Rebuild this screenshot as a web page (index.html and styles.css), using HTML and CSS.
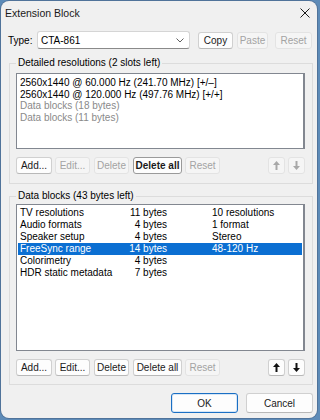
FILE: index.html
```html
<!DOCTYPE html>
<html lang="en">

<head>
    <meta charset="utf-8">
    <meta name="viewport" content="width=device-width, initial-scale=1.0">
    <title>Extension Block</title>
    <link rel="stylesheet" href="styles.css">
</head>

<body>

    <div class="window">
        <div class="titlebar">
            <span>Extension Block</span>
            <svg class="close" width="10" height="10" viewBox="0 0 10 10">
                <path d="M0.5 0.5L9.5 9.5M9.5 0.5L0.5 9.5" stroke="#1a1a1a" stroke-width="1" />
            </svg>
        </div>

        <div class="content">
            <div class="type-row">
                <span class="type-label">Type:</span>
                <div class="combo">
                    <span>CTA-861</span>
                    <svg width="8" height="5" viewBox="0 0 8 5">
                        <path d="M0.5 0.5L4 4L7.5 0.5" fill="none" stroke="#606060" />
                    </svg>
                </div>
                <button class="btn copy">Copy</button>
                <button class="btn paste" disabled>Paste</button>
                <button class="btn reset-top" disabled>Reset</button>
            </div>

            <fieldset class="group group-res">
                <legend>Detailed resolutions (2 slots left)</legend>
                <div class="listbox list-res">
                    <div class="row">2560x1440 @ 60.000 Hz (241.70 MHz) [+/–]</div>
                    <div class="row">2560x1440 @ 120.000 Hz (497.76 MHz) [+/+]</div>
                    <div class="row muted">Data blocks (18 bytes)</div>
                    <div class="row muted">Data blocks (11 bytes)</div>
                </div>
                <div class="btn-row">
                    <button class="btn w-add">Add...</button>
                    <button class="btn w-edit" disabled>Edit...</button>
                    <button class="btn w-del" disabled>Delete</button>
                    <button class="btn w-delall focus">Delete all</button>
                    <button class="btn w-reset" disabled>Reset</button>
                    <span class="spacer"></span>
                    <button class="btn arrow" disabled>
                        <svg width="7" height="9" viewBox="0 0 7 9"><path d="M3.5 0L7 4H4.5V9H2.5V4H0Z" fill="currentColor" /></svg>
                    </button>
                    <button class="btn arrow" disabled>
                        <svg width="7" height="9" viewBox="0 0 7 9"><path d="M3.5 9L7 5H4.5V0H2.5V5H0Z" fill="currentColor" /></svg>
                    </button>
                </div>
            </fieldset>

            <fieldset class="group group-data">
                <legend>Data blocks (43 bytes left)</legend>
                <div class="listbox list-data">
                    <div class="row"><span>TV resolutions</span><span class="size">11 bytes</span><span class="info">10 resolutions</span></div>
                    <div class="row"><span>Audio formats</span><span class="size">4 bytes</span><span class="info">1 format</span></div>
                    <div class="row"><span>Speaker setup</span><span class="size">4 bytes</span><span class="info">Stereo</span></div>
                    <div class="row selected"><span>FreeSync range</span><span class="size">14 bytes</span><span class="info">48-120 Hz</span></div>
                    <div class="row"><span>Colorimetry</span><span class="size">4 bytes</span><span class="info"></span></div>
                    <div class="row"><span>HDR static metadata</span><span class="size">7 bytes</span><span class="info"></span></div>
                </div>
                <div class="btn-row">
                    <button class="btn w-add">Add...</button>
                    <button class="btn w-edit">Edit...</button>
                    <button class="btn w-del">Delete</button>
                    <button class="btn w-delall">Delete all</button>
                    <button class="btn w-reset" disabled>Reset</button>
                    <span class="spacer"></span>
                    <button class="btn arrow">
                        <svg width="7" height="9" viewBox="0 0 7 9"><path d="M3.5 0L7 4H4.5V9H2.5V4H0Z" fill="currentColor" /></svg>
                    </button>
                    <button class="btn arrow">
                        <svg width="7" height="9" viewBox="0 0 7 9"><path d="M3.5 9L7 5H4.5V0H2.5V5H0Z" fill="currentColor" /></svg>
                    </button>
                </div>
            </fieldset>

            <div class="dialog-buttons">
                <button class="btn ok">OK</button>
                <button class="btn cancel">Cancel</button>
            </div>
        </div>
    </div>

</body></html>
```

FILE: styles.css
```css
body {
    margin: 0;
    width: 320px;
    height: 420px;
    overflow: hidden;
    background-color: #5d8bb8;
    font-family: "Liberation Sans", Arial, sans-serif;
    font-size: 10px;
    color: #000;
}

.window {
    margin: 1px 0 0 1px;
    width: 316px;
    height: 417px;
    background-color: #f0f0f0;
    border-radius: 8px;
    box-shadow: 0 0 0 1px #50739a;
    overflow: hidden;
}

.titlebar {
    height: 24px;
    display: flex;
    align-items: center;
    justify-content: space-between;
    padding: 0 7px 0 4px;
    font-size: 10.5px;
    color: #1a1a1a;
}

.content {
    padding: 0 4px 0 7px;
}

/* type row */

.type-row {
    margin-top: 6px;
    height: 18px;
    display: flex;
    align-items: center;
}

.type-label {
    width: 29px;
}

.combo {
    width: 153px;
    height: 18px;
    box-sizing: border-box;
    display: flex;
    align-items: center;
    justify-content: space-between;
    padding: 0 5px 0 3px;
    background-color: #fff;
    border: 1px solid #d5d5d5;
    border-bottom-color: #8a8a8a;
    border-radius: 3px;
    margin-right: 8px;
}

/* buttons */

.btn {
    height: 17px;
    box-sizing: border-box;
    padding: 0;
    font: inherit;
    white-space: nowrap;
    color: #1a1a1a;
    background-color: #fdfdfd;
    border: 1px solid #d0d0d0;
    border-bottom-color: #b8b8b8;
    border-radius: 3px;
    display: flex;
    align-items: center;
    justify-content: center;
}

.btn:disabled {
    color: #a3a3a3;
    background-color: #f5f5f5;
    border-color: #e3e3e3;
}

.btn.focus {
    font-weight: bold;
    border-color: #9a9a9a;
}

.copy {
    width: 35px;
}

.paste {
    width: 31px;
    margin-left: 4px;
}

.reset-top {
    width: 37px;
    margin-left: 7px;
}

/* groups */

.group {
    margin: 7px 0 0 1px;
    padding: 3px 7px 9px 6px;
    border: 1px solid #dcdcdc;
    min-width: 0;
}

.group legend {
    padding: 0 2px;
    line-height: 14px;
}

.group-data {
    margin-top: 5px;
    padding-top: 1px;
    padding-bottom: 8px;
}

.listbox {
    box-sizing: border-box;
    background-color: #fff;
    border: 1px solid #828790;
    border-right-width: 2px;
    padding: 1px;
}

.list-res {
    height: 76px;
    padding-top: 3px;
}

.list-res .row {
    line-height: 11.5px;
    padding-left: 2px;
    white-space: nowrap;
}

.muted {
    color: #8a8a8a;
}

.list-data {
    height: 147px;
    padding-top: 2px;
}

.list-data .row {
    display: grid;
    grid-template-columns: 108px 39px 1fr;
    line-height: 12px;
    padding-left: 2px;
    white-space: nowrap;
}

.list-data .size {
    text-align: right;
}

.list-data .info {
    padding-left: 45px;
}

.selected {
    background-color: #0b6fd2;
    color: #fff;
}

.btn-row {
    margin-top: 8px;
    display: flex;
}

.spacer {
    flex: 1;
}

.w-add {
    width: 36px;
}

.w-edit {
    width: 35px;
    margin-left: 3px;
}

.w-del {
    width: 35px;
    margin-left: 4px;
}

.w-delall {
    width: 49px;
    margin-left: 4px;
}

.w-reset {
    width: 35px;
    margin-left: 3px;
}

.arrow {
    width: 17px;
    margin-left: 3px;
    color: #111;
}

.arrow:disabled {
    color: #a8a8a8;
}

/* ok / cancel */

.dialog-buttons {
    margin-top: 8px;
    display: flex;
    justify-content: flex-end;
    gap: 8px;
}

.dialog-buttons .btn {
    width: 67px;
    height: 20px;
}

.ok {
    border: 1px solid #1a6fc4;
    box-shadow: inset 0 0 0 1px #d6e6f6;
}
```
